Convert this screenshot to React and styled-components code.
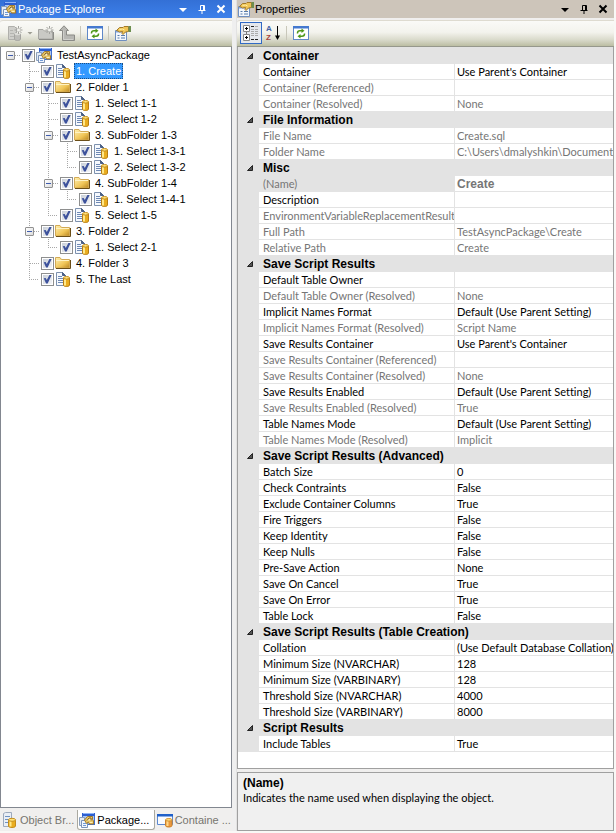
import { useState } from "react";
import styled, { createGlobalStyle, css } from "styled-components";

const GlobalStyle = createGlobalStyle`
  *, *::before, *::after {
    box-sizing: border-box;
  }
  body {
    margin: 0;
    background: #f9f8f6;
    font-family: "Liberation Sans", Arial, sans-serif;
    font-size: 11px;
    line-height: 16px;
    color: #000;
  }
  button, input {
    font: inherit;
  }
`;

const Page = styled.main`
  display: grid;
  grid-template-columns: minmax(0, 232fr) 5px minmax(0, 377fr);
  min-height: 100vh;
  padding: 0 2px 2px 0;
`;

const Splitter = styled.div`
  background: #efefef;
  border-right: 1px solid #e2e2e2;
`;

const Panel = styled.section`
  display: flex;
  flex-direction: column;
  min-width: 0;
  background: #f0efee;
`;

const Caption = styled.header`
  display: flex;
  align-items: center;
  height: 18px;
  padding: 0 5px 0 1px;
  color: ${(p) => (p.$active ? "#fff" : "#000")};
  background: ${(p) =>
    p.$active ? "linear-gradient(#3370d6, #3c80ea)" : "#cdc5ba"};
`;

const CaptionTitle = styled.h1`
  flex: 1;
  margin: 0 0 0 1px;
  font-size: 11px;
  font-weight: normal;
  white-space: nowrap;
`;

const CaptionButtons = styled.div`
  display: flex;
  gap: 7px;
`;

const IconButton = styled.button`
  display: flex;
  align-items: center;
  justify-content: center;
  width: ${(p) => p.$width || 16}px;
  height: 16px;
  padding: 0;
  border: 0;
  background: none;
  color: inherit;
`;

const Toolbar = styled.div`
  display: flex;
  align-items: center;
  gap: 5px;
  height: 27px;
  margin-top: 2px;
  padding: 0 0 2px ${(p) => p.$inset}px;
  border-top: 1px solid #dedbd0;
  border-bottom: 1px solid #96988c;
  border-radius: 3px 0 0 0;
  background: linear-gradient(#fafaf7, #f3f3ed 45%, #d9dacb 75%, #bcbea3);
`;

const ToolGroup = styled.div`
  display: flex;
  align-items: center;
  gap: 3px;
`;

const ToggleButton = styled(IconButton)`
  width: 22px;
  height: 22px;
  border: 1px solid #316ac5;
  background: #e5e8ed;
`;

const Separator = styled.span`
  width: 1px;
  height: 14px;
  margin-right: 1px;
  background: #c8c7ba;
`;

const TreeBox = styled.div`
  flex: 1;
  border: 1px solid #828790;
  border-top: 0;
  background: #fff;
`;

const TreeList = styled.ul`
  margin: 0;
  padding: 0;
  list-style: none;
`;

const TreeRow = styled.div`
  display: flex;
  align-items: center;
  height: 16px;
`;

const dotsDown = "repeating-linear-gradient(#a8a8a8 0 1px, #fff 1px 2px)";
const dotsRight =
  "repeating-linear-gradient(90deg, #a8a8a8 0 1px, #fff 1px 2px)";

const guides = {
  blank: css``,
  through: css`
    background: ${dotsDown} 9px 0 / 1px 16px no-repeat;
  `,
  root: css`
    background: ${dotsRight} 10px 8px / 9px 1px no-repeat;
  `,
  tee: css`
    background: ${dotsDown} 9px 0 / 1px 16px no-repeat,
      ${dotsRight} 10px 8px / 9px 1px no-repeat;
  `,
  elbow: css`
    background: ${dotsDown} 9px 0 / 1px 8px no-repeat,
      ${dotsRight} 9px 8px / 10px 1px no-repeat;
  `,
};

const Guide = styled.span`
  display: flex;
  align-items: center;
  flex: none;
  width: 19px;
  height: 16px;
  padding-left: 5px;
  ${(p) => guides[p.$kind]}
`;

const Expander = styled.button`
  width: 9px;
  height: 9px;
  padding: 0;
  border: 1px solid #919191;
  border-radius: 1px;
  background: linear-gradient(#3f5cad, #3f5cad) 1px 3px / 5px 1px no-repeat,
    linear-gradient(135deg, #fff, #dcdcdc);
`;

const Check = styled.input`
  appearance: none;
  flex: none;
  display: grid;
  place-items: center;
  width: 13px;
  height: 13px;
  margin: 0 1px 0 2px;
  border: 1px solid #8e8f8f;
  background: linear-gradient(135deg, #c9cfd8, #f4f5f7) content-box #fff;
  padding: 1px;

  &:checked::before {
    content: "";
    width: 9px;
    height: 9px;
    background: #3d529c;
    clip-path: polygon(8% 42%, 30% 40%, 42% 62%, 74% 0, 98% 0, 52% 100%, 34% 100%);
  }
`;

const TreeLabel = styled.label`
  height: 16px;
  margin-left: 3px;
  padding: 0 2px;
  line-height: 16px;
  white-space: nowrap;
  ${(p) =>
    p.$selected &&
    css`
      color: #fff;
      background: #3399ff;
      outline: 1px dotted #1c4d80;
      outline-offset: -1px;
    `}
`;

const Tabs = styled.nav`
  display: flex;
  height: 23px;
  padding: 2px 0 1px;
`;

const Tab = styled.button`
  display: flex;
  align-items: center;
  flex: 1 1 0;
  gap: 2px;
  min-width: 0;
  height: 20px;
  padding: 0 1px;
  overflow: hidden;
  border: 1px solid transparent;
  border-top: 0;
  border-radius: 0 0 3px 3px;
  color: #77756f;
  background: none;
  white-space: nowrap;
  ${(p) =>
    p.$active &&
    css`
      color: #000;
      background: #fff;
      border-color: #aaa9a0;
    `}
`;

const GridBox = styled.div`
  flex: 1;
  padding-top: 1px;
  border: 1px solid #a0a0a0;
  border-top: 0;
  background: linear-gradient(#e3e3e3, #e3e3e3) 0 0 / 100% 1px no-repeat #fff;
`;

const PropertyTable = styled.table`
  width: 100%;
  table-layout: fixed;
  border-spacing: 0;
  font-family: Lato, "Liberation Sans", sans-serif;
  font-variant-ligatures: none;
`;

const GutterCol = styled.col`
  width: 21px;
`;

const NameCol = styled.col`
  width: 52%;
`;

const Gutter = styled.td`
  height: 16px;
  padding: 0 0 0 7px;
  background: #e3e3e3;
`;

const CategoryHead = styled.th`
  height: 16px;
  padding: 0 4px;
  background: #e3e3e3;
  font-family: "Liberation Sans", Arial, sans-serif;
  font-size: 12px;
  line-height: 15px;
  text-align: left;
`;

const PropertyName = styled.th`
  height: 16px;
  padding: 1px 0 0 4px;
  overflow: hidden;
  border-bottom: 1px solid #e3e3e3;
  color: ${(p) => (p.$muted ? "#767676" : "#000")};
  background: ${(p) => (p.$selected ? "#e3e3e3" : "#fff")};
  font-weight: normal;
  line-height: 14px;
  text-align: left;
  white-space: nowrap;
`;

const PropertyValue = styled.td`
  height: 16px;
  padding: 1px 0 0 2px;
  overflow: hidden;
  border-bottom: 1px solid #e3e3e3;
  border-left: 1px solid #e3e3e3;
  color: ${(p) => (p.$muted ? "#767676" : "#000")};
  line-height: 14px;
  white-space: nowrap;
  ${(p) =>
    p.$bold &&
    css`
      font-family: "Liberation Sans", Arial, sans-serif;
      font-size: 12px;
      font-weight: bold;
    `}
`;

const CollapseButton = styled(IconButton)`
  width: 9px;
  height: 15px;
`;

const HelpBox = styled.aside`
  height: 59px;
  margin-top: 3px;
  padding: 2px 5px;
  border: 1px solid #a0a0a0;
  background: #f0f0f0;
`;

const HelpTitle = styled.h2`
  margin: 0;
  font-size: 12px;
  line-height: 16px;
`;

const HelpText = styled.p`
  margin: 0;
  font-family: Lato, "Liberation Sans", sans-serif;
  line-height: 14px;
`;

const SortLetter = styled.text`
  font: bold 8px "Liberation Sans", sans-serif;
`;

const IconSvg = styled.svg`
  flex: none;
  overflow: visible;
`;

const Svg = ({ size = 16, children }) => (
  <IconSvg
    width={size}
    height={size}
    viewBox={`0 0 ${size} ${size}`}
    fill="none"
    aria-hidden="true"
  >
    {children}
  </IconSvg>
);

const PackageIcon = () => (
  <Svg>
    <rect x="3.500" y="1.500" width="12" height="11" fill="#a9c6f5" stroke="#3f6fcd" />
    <path d="M3 1h13v3H3z" fill="#2d5fd0" />
    <path d="M4 1.500h11" stroke="#8fb4f7" />
    <path d="M.5 5.500h5v8h-5z" fill="#e3ebf6" stroke="#8ba0bd" />
    <path d="M2.500 8.500h6v7h-6z" fill="#f2f6fc" stroke="#7b93b8" />
    <path d="M4 11.500h3M4 13.500h3" stroke="#6f9ad6" />
    <path
      d="M5.500 8l3-3.500h5v3l1 1.500v3h-4l-1-2-2 1.500z"
      fill="#e9c766"
      stroke="#a27a2c"
    />
    <path d="M8 8.500l2-2.500h2v2.500" fill="#fff4c6" stroke="#7b591d" />
    <path d="M10.500 10.500h3" stroke="#fff0b8" />
  </Svg>
);

const ScriptIcon = () => (
  <Svg>
    <path d="M1.500 1.500h6l3 3v10h-9z" fill="#f6f9fd" stroke="#7d91ae" />
    <path d="M7.500 1.500v3h3z" fill="#4c6186" stroke="#4c6186" />
    <path d="M3 5.500h4M3 7.500h5M3 9.500h5M3 11.500h5" stroke="#6f89b4" />
    <path d="M8.500 7v7c0 1 1.500 1.500 3 1.500s3-.5 3-1.500V7z" fill="#e9ad20" stroke="#b77d13" />
    <path d="M10 8v6.500" stroke="#ffe88a" strokeWidth="2" />
    <ellipse cx="11.500" cy="6.800" rx="3" ry="1.300" fill="#ffe27a" stroke="#c58f1f" />
  </Svg>
);

const FolderIcon = () => (
  <Svg>
    <defs>
      <linearGradient id="folder" x1="0" y1="0" x2="1" y2="1">
        <stop offset="0" stopColor="#fff1b4" />
        <stop offset="0.6" stopColor="#f0c557" />
        <stop offset="1" stopColor="#b98520" />
      </linearGradient>
    </defs>
    <path d="M.5 13V2.500H5l1.500 2h8V13z" fill="url(#folder)" stroke="#d3aa55" />
    <path d="M1 5.500h13" stroke="#fff3c4" />
    <path d="M1 13.500h14.500V5" stroke="#6b4e17" />
  </Svg>
);

const RefreshIcon = () => (
  <Svg>
    <rect x="0.500" y="1.500" width="15" height="13" fill="#fff" stroke="#5f88c8" />
    <path d="M0 1h16v2.500H0z" fill="#4479cf" />
    <path d="M4.500 8.500V8c0-1.500 1-2.200 2.500-2.200h2" stroke="#4c9717" strokeWidth="1.500" />
    <path d="M8.500 3.500l3 2.300-3 2.200z" fill="#4c9717" />
    <path d="M11.500 8.500V9c0 1.500-1 2.200-2.500 2.200H7" stroke="#4c9717" strokeWidth="1.500" />
    <path d="M7.500 9l-3 2.200 3 2.300z" fill="#4c9717" />
  </Svg>
);

const PropertiesIcon = () => (
  <Svg>
    <path d="M.5 5.500h11v10H.5z" fill="#f3f7fd" stroke="#6f8fc0" />
    <path d="M1 6h10v1.500H1z" fill="#80a4dc" />
    <path d="M2.500 10.500h2M2.500 13h2M6 10.500h4M6 13h4" stroke="#577aaa" />
    <path
      d="M1.500 5.500l3-3h3.500l1-1h4.500v5l-3 .5-2.500 2.500-1-1 .5-2-3 .5-1.500-1z"
      fill="#efc455"
      stroke="#a37a2a"
    />
    <path d="M4.500 4.500l3-.5 2 1" stroke="#fff0a5" />
    <path d="M13.500 1H16v6h-2.500z" fill="#6d8f4f" />
  </Svg>
);

const NewItemIcon = () => (
  <Svg>
    <path d="M1.500 1.500h6l2 2v11h-8z" fill="#cfcfcb" stroke="#b0b0ac" />
    <path d="M3 5.500h3M3 8.500h4M3 11.500h4" stroke="#b5b5b1" />
    <path d="M7.500 9v5c0 2 6 2 6 0V9z" fill="#bcbcb8" stroke="#a4a4a0" />
    <ellipse cx="10.500" cy="9" rx="3" ry="1.300" fill="#dcdcd8" />
    <path d="M11.500 1v8M7.500 5h8M8.500 2l6 6M14.500 2l-6 6" stroke="#a3a39f" />
    <circle cx="11.500" cy="5" r="1.500" fill="#f2f2ee" />
  </Svg>
);

const NewFolderIcon = () => (
  <Svg>
    <path d="M.5 14V4.500H5L6.500 6h8v8z" fill="#c9c9c5" stroke="#a6a6a2" />
    <path d="M1 14.500h14.500V7" stroke="#8b8b87" />
    <path d="M11.500 1v8M7.500 5h8M8.500 2l6 6M14.500 2l-6 6" stroke="#a3a39f" />
    <circle cx="11.500" cy="5" r="1.500" fill="#f2f2ee" />
  </Svg>
);

const MoveUpIcon = () => (
  <Svg>
    <path d="M5 .8l4.500 4.700H7.500V10h8v5.500h-12v-10H.5z" fill="#b7b7b3" stroke="#8b8b87" />
    <path d="M4.500 5.500v9H14" stroke="#cfcfcb" />
  </Svg>
);

const CategorizedIcon = () => (
  <Svg>
    <path d="M3.500 6v4" stroke="#777" />
    <path d="M.5.500h6v6h-6zM.5 9.500h6v6h-6z" fill="#fff" stroke="#888" />
    <path d="M2 3.500h3M3.500 2v3M2 12.500h3M3.500 11v3" stroke="#000" />
    <path d="M8 1.500h3M8 14.500h3M12 14.500h3" stroke="#222" />
    <path
      d="M8 4.500h3M8 6.500h3M8 8.500h3M8 10.500h3M12 1.500h3M12 4.500h3M12 6.500h3M12 8.500h3M12 10.500h3"
      stroke="#aaa"
    />
  </Svg>
);

const SortIcon = () => (
  <Svg>
    <SortLetter x="1" y="6" fill="#4864a5">
      A
    </SortLetter>
    <SortLetter x="1" y="15" fill="#a8433c">
      Z
    </SortLetter>
    <path d="M12.500 1v11" stroke="#000" />
    <path d="M10 10.500h5L12.500 15z" fill="#000" />
  </Svg>
);

const ServerIcon = () => (
  <Svg>
    <path d="M1.500 1.500l2-1h6v13l-2 1h-6z" fill="#e9eef5" stroke="#9ca9bc" />
    <path d="M3 4.500h5M3 7.500h5M3 10.500h3" stroke="#6f91c0" />
    <path d="M6.500 8v6c0 2 7 2 7 0V8z" fill="#e9ad20" stroke="#c38b1b" />
    <path d="M8.500 9v5.500" stroke="#ffe88a" strokeWidth="2" />
    <ellipse cx="10" cy="7.800" rx="3.500" ry="1.500" fill="#ffe27a" stroke="#c58f1f" />
  </Svg>
);

const ContainerIcon = () => (
  <Svg>
    <path d="M.5 2.500h15v10H.5z" fill="#f8fbff" stroke="#5c88cf" />
    <path d="M0 2h16v2.500H0z" fill="#1f60c9" />
    <path d="M8.500 8v5.500c0 2 6.500 2 6.500 0V8z" fill="#e9963d" stroke="#cb8028" />
    <path d="M10.500 9v5" stroke="#ffd98a" strokeWidth="2" />
    <ellipse cx="11.800" cy="7.800" rx="3.200" ry="1.300" fill="#ffdb80" stroke="#d29435" />
  </Svg>
);

const MenuGlyph = () => (
  <Svg size={10}>
    <path d="M1 4h8L5 8z" fill="currentColor" />
  </Svg>
);

const PinGlyph = () => (
  <Svg size={10}>
    <path d="M3.500 6V1.500h4V6M6.500 1v5M1.500 6.500h7M5 7v3" stroke="currentColor" />
  </Svg>
);

const CloseGlyph = () => (
  <Svg size={10}>
    <path d="M1.500 1.500l7 7M8.500 1.500l-7 7" stroke="currentColor" strokeWidth="2" />
  </Svg>
);

const SmallArrow = () => (
  <Svg size={6}>
    <path d="M.5 2h5L3 4.500z" fill="#9c9c92" />
  </Svg>
);

const CollapseGlyph = () => (
  <Svg size={8}>
    <path d="M6.500 1.500v5h-5z" fill="#555" stroke="#222" />
  </Svg>
);

const tree = {
  name: "TestAsyncPackage",
  icon: PackageIcon,
  children: [
    { name: "1. Create" },
    {
      name: "2. Folder 1",
      icon: FolderIcon,
      children: [
        { name: "1. Select 1-1" },
        { name: "2. Select 1-2" },
        {
          name: "3. SubFolder 1-3",
          icon: FolderIcon,
          children: [{ name: "1. Select 1-3-1" }, { name: "2. Select 1-3-2" }],
        },
        {
          name: "4. SubFolder 1-4",
          icon: FolderIcon,
          children: [{ name: "1. Select 1-4-1" }],
        },
        { name: "5. Select 1-5" },
      ],
    },
    {
      name: "3. Folder 2",
      icon: FolderIcon,
      children: [{ name: "1. Select 2-1" }],
    },
    { name: "4. Folder 3", icon: FolderIcon },
    { name: "5. The Last" },
  ],
};

// [name, value, muted]
const categories = [
  {
    title: "Container",
    rows: [
      ["Container", "Use Parent's Container"],
      ["Container (Referenced)", "", true],
      ["Container (Resolved)", "None", true],
    ],
  },
  {
    title: "File Information",
    rows: [
      ["File Name", "Create.sql", true],
      ["Folder Name", "C:\\Users\\dmalyshkin\\Documents", true],
    ],
  },
  {
    title: "Misc",
    rows: [
      ["(Name)", "Create", true],
      ["Description", ""],
      ["EnvironmentVariableReplacementResult", "", true],
      ["Full Path", "TestAsyncPackage\\Create", true],
      ["Relative Path", "Create", true],
    ],
  },
  {
    title: "Save Script Results",
    rows: [
      ["Default Table Owner", ""],
      ["Default Table Owner (Resolved)", "None", true],
      ["Implicit Names Format", "Default (Use Parent Setting)"],
      ["Implicit Names Format (Resolved)", "Script Name", true],
      ["Save Results Container", "Use Parent's Container"],
      ["Save Results Container (Referenced)", "", true],
      ["Save Results Container (Resolved)", "None", true],
      ["Save Results Enabled", "Default (Use Parent Setting)"],
      ["Save Results Enabled (Resolved)", "True", true],
      ["Table Names Mode", "Default (Use Parent Setting)"],
      ["Table Names Mode (Resolved)", "Implicit", true],
    ],
  },
  {
    title: "Save Script Results (Advanced)",
    rows: [
      ["Batch Size", "0"],
      ["Check Contraints", "False"],
      ["Exclude Container Columns", "True"],
      ["Fire Triggers", "False"],
      ["Keep Identity", "False"],
      ["Keep Nulls", "False"],
      ["Pre-Save Action", "None"],
      ["Save On Cancel", "True"],
      ["Save On Error", "True"],
      ["Table Lock", "False"],
    ],
  },
  {
    title: "Save Script Results (Table Creation)",
    rows: [
      ["Collation", "(Use Default Database Collation)"],
      ["Minimum Size (NVARCHAR)", "128"],
      ["Minimum Size (VARBINARY)", "128"],
      ["Threshold Size (NVARCHAR)", "4000"],
      ["Threshold Size (VARBINARY)", "8000"],
    ],
  },
  {
    title: "Script Results",
    rows: [["Include Tables", "True"]],
  },
];

function TreeNode({ node, id = "node", trail = [], isRoot, isLast }) {
  const [open, setOpen] = useState(true);
  const Icon = node.icon || ScriptIcon;
  const own = isRoot ? "root" : isLast ? "elbow" : "tee";
  const nextTrail = [...trail, isRoot || isLast ? "blank" : "through"];

  return (
    <li>
      <TreeRow>
        {trail.map((kind, i) => (
          <Guide key={i} $kind={kind} />
        ))}
        <Guide $kind={own}>
          {node.children && (
            <Expander aria-label="Toggle" onClick={() => setOpen(!open)} />
          )}
        </Guide>
        <Check type="checkbox" id={id} defaultChecked />
        <Icon />
        <TreeLabel htmlFor={id} $selected={node.name === "1. Create"}>
          {node.name}
        </TreeLabel>
      </TreeRow>
      {node.children && open && (
        <TreeList>
          {node.children.map((child, i) => (
            <TreeNode
              key={child.name}
              node={child}
              id={`${id}-${i}`}
              trail={nextTrail}
              isLast={i === node.children.length - 1}
            />
          ))}
        </TreeList>
      )}
    </li>
  );
}

function WindowButtons() {
  return (
    <CaptionButtons>
      <IconButton $width={12} aria-label="Menu">
        <MenuGlyph />
      </IconButton>
      <IconButton $width={12} aria-label="Auto hide">
        <PinGlyph />
      </IconButton>
      <IconButton $width={12} aria-label="Close">
        <CloseGlyph />
      </IconButton>
    </CaptionButtons>
  );
}

function Category({ title, rows }) {
  const [open, setOpen] = useState(true);

  return (
    <tbody>
      <tr>
        <Gutter>
          <CollapseButton aria-label="Toggle" onClick={() => setOpen(!open)}>
            <CollapseGlyph />
          </CollapseButton>
        </Gutter>
        <CategoryHead colSpan={2}>{title}</CategoryHead>
      </tr>
      {open &&
        rows.map(([name, value, muted]) => (
          <tr key={name}>
            <Gutter />
            <PropertyName scope="row" $muted={muted} $selected={name === "(Name)"}>
              {name}
            </PropertyName>
            <PropertyValue $muted={muted} $bold={name === "(Name)"}>
              {value}
            </PropertyValue>
          </tr>
        ))}
    </tbody>
  );
}

export default function App() {
  return (
    <>
      <GlobalStyle />
      <Page>
        <Panel>
          <Caption $active>
            <PackageIcon />
            <CaptionTitle>Package Explorer</CaptionTitle>
            <WindowButtons />
          </Caption>
          <Toolbar $inset={7}>
            <ToolGroup>
              <IconButton aria-label="New script">
                <NewItemIcon />
              </IconButton>
              <IconButton $width={7} aria-label="New script options">
                <SmallArrow />
              </IconButton>
            </ToolGroup>
            <IconButton aria-label="New folder">
              <NewFolderIcon />
            </IconButton>
            <IconButton aria-label="Move up">
              <MoveUpIcon />
            </IconButton>
            <Separator />
            <IconButton aria-label="Refresh">
              <RefreshIcon />
            </IconButton>
            <Separator />
            <IconButton aria-label="Properties">
              <PropertiesIcon />
            </IconButton>
          </Toolbar>
          <TreeBox>
            <TreeList>
              <TreeNode node={tree} isRoot />
            </TreeList>
          </TreeBox>
          <Tabs>
            <Tab>
              <ServerIcon />
              Object Br...
            </Tab>
            <Tab $active>
              <PackageIcon />
              Package...
            </Tab>
            <Tab>
              <ContainerIcon />
              Containe ...
            </Tab>
          </Tabs>
        </Panel>
        <Splitter />
        <Panel>
          <Caption>
            <PropertiesIcon />
            <CaptionTitle>Properties</CaptionTitle>
            <WindowButtons />
          </Caption>
          <Toolbar $inset={3}>
            <ToolGroup>
              <ToggleButton aria-label="Categorized">
                <CategorizedIcon />
              </ToggleButton>
              <IconButton aria-label="Alphabetical">
                <SortIcon />
              </IconButton>
            </ToolGroup>
            <Separator />
            <IconButton aria-label="Refresh">
              <RefreshIcon />
            </IconButton>
          </Toolbar>
          <GridBox>
            <PropertyTable>
              <colgroup>
                <GutterCol />
                <NameCol />
                <col />
              </colgroup>
              {categories.map((category) => (
                <Category key={category.title} {...category} />
              ))}
            </PropertyTable>
          </GridBox>
          <HelpBox>
            <HelpTitle>(Name)</HelpTitle>
            <HelpText>Indicates the name used when displaying the object.</HelpText>
          </HelpBox>
        </Panel>
      </Page>
    </>
  );
}
